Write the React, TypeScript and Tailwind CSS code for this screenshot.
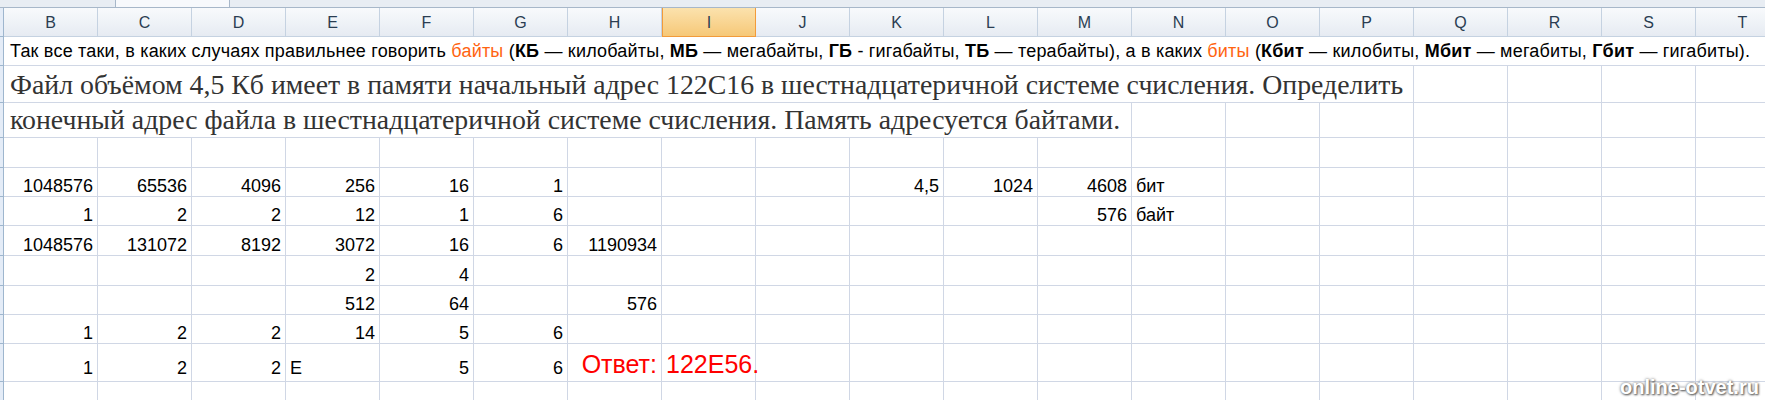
import React from "react";

const COLS = ["B", "C", "D", "E", "F", "G", "H", "I", "J", "K", "L", "M", "N", "O", "P", "Q", "R", "S", "T"];

const sans = "font-['Liberation_Sans',Arial,sans-serif]";
const serif = "font-['Liberation_Serif','Times_New_Roman',serif]";

type Cell = { v: string; left?: boolean; red?: boolean };
type Row = { h: string; pb: string; cells: Partial<Record<string, Cell>> };

const n = (v: string): Cell => ({ v });

const rows: Row[] = [
  { h: "h-[30px]", pb: "pb-[1px]", cells: {} },
  {
    h: "h-[29px]",
    pb: "pb-[1px]",
    cells: {
      B: n("1048576"), C: n("65536"), D: n("4096"), E: n("256"), F: n("16"), G: n("1"),
      K: n("4,5"), L: n("1024"), M: n("4608"), N: { v: "бит", left: true },
    },
  },
  {
    h: "h-[29px]",
    pb: "pb-[1px]",
    cells: {
      B: n("1"), C: n("2"), D: n("2"), E: n("12"), F: n("1"), G: n("6"),
      M: n("576"), N: { v: "байт", left: true },
    },
  },
  {
    h: "h-[30px]",
    pb: "pb-[1px]",
    cells: {
      B: n("1048576"), C: n("131072"), D: n("8192"), E: n("3072"), F: n("16"), G: n("6"),
      H: n("1190934"),
    },
  },
  { h: "h-[30px]", pb: "pb-[1px]", cells: { E: n("2"), F: n("4") } },
  { h: "h-[29px]", pb: "pb-[1px]", cells: { E: n("512"), F: n("64"), H: n("576") } },
  {
    h: "h-[29px]",
    pb: "pb-[1px]",
    cells: { B: n("1"), C: n("2"), D: n("2"), E: n("14"), F: n("5"), G: n("6") },
  },
  {
    h: "h-[38px]",
    pb: "pb-[4px]",
    cells: {
      B: n("1"), C: n("2"), D: n("2"), E: { v: "E", left: true }, F: n("5"), G: n("6"),
      H: { v: "Ответ:", red: true }, I: { v: "122E56.", left: true, red: true },
    },
  },
  { h: "h-[30px]", pb: "pb-[1px]", cells: {} },
];

function RowStub() {
  return <div className="h-full w-[4px] shrink-0 border-r border-b border-[#9eb6ce] bg-[#e4ecf7]" />;
}

function GridCell({ cell, pb }: { cell?: Cell; pb: string }) {
  if (!cell) {
    return <div className="h-full w-[94px] shrink-0 border-r border-b border-[#d0d7e5]" />;
  }
  const align = cell.left ? "justify-start pl-[4px]" : "justify-end pr-[4px]";
  const text = cell.red
    ? "text-[25px] leading-[25px] text-[#ff0000]"
    : "text-[18px] leading-[18px] text-black";
  return (
    <div
      className={`flex h-full w-[94px] shrink-0 items-end whitespace-nowrap border-r border-b border-[#d0d7e5] ${align} ${pb} ${text}`}
    >
      {cell.v}
    </div>
  );
}

function EmptyCells({ count }: { count: number }) {
  return (
    <>
      {Array.from({ length: count }).map((_, i) => (
        <div key={i} className="h-full w-[94px] shrink-0 border-r border-b border-[#d0d7e5]" />
      ))}
    </>
  );
}

export default function App() {
  return (
    <div className={`relative h-[400px] w-[1765px] overflow-hidden bg-white ${sans}`}>
      {/* remains of the formula bar */}
      <div className="relative h-[8px] border-b border-[#a7b7c9] bg-[#e8edf3]">
        <div className="absolute left-[115px] top-0 h-[7px] w-[115px] border-x border-[#a7b7c9] bg-[#f7f9fc]" />
      </div>

      {/* column headers */}
      <div className="flex h-[29px]">
        <div className="h-full w-[4px] shrink-0 border-r border-b border-[#9eb6ce] bg-[#e4ecf7]" />
        {COLS.map((c) =>
          c === "I" ? (
            <div
              key={c}
              className="flex h-full w-[94px] shrink-0 items-center justify-center border-x border-b border-[#f29b3a] bg-gradient-to-b from-[#fbe2ad] to-[#f6c877] pt-[1px] text-[16px] text-[#2a3d52]"
            >
              {c}
            </div>
          ) : (
            <div
              key={c}
              className="flex h-full w-[94px] shrink-0 items-center justify-center border-r border-b border-[#c5d2e1] bg-gradient-to-b from-[#f8fafc] to-[#e6ebf2] pt-[1px] text-[16px] text-[#2a3d52]"
            >
              {c}
            </div>
          )
        )}
      </div>

      {/* row 1: note about bytes and bits */}
      <div className="flex h-[29px]">
        <RowStub />
        <div className="flex h-full w-[1786px] shrink-0 items-end whitespace-nowrap border-b border-[#d0d7e5] pb-[5px] pl-[6px] text-[18px] leading-[18px] tracking-[0.2px] text-black">
          <span>
            Так все таки, в каких случаях правильнее говорить{" "}
            <span className="text-[#ff6410]">байты</span> (<b>КБ</b> — килобайты, <b>МБ</b> — мегабайты,{" "}
            <b>ГБ</b> - гигабайты, <b>ТБ</b> — терабайты), а в каких{" "}
            <span className="text-[#ff6410]">биты</span> (<b>Кбит</b> — килобиты, <b>Мбит</b> — мегабиты,{" "}
            <b>Гбит</b> — гигабиты).
          </span>
        </div>
      </div>

      {/* rows 2-3: the task */}
      <div className="flex h-[37px]">
        <RowStub />
        <div
          className={`flex h-full w-[1410px] shrink-0 items-end whitespace-nowrap border-r border-b border-[#d0d7e5] pb-[3px] pl-[6px] text-[27.8px] leading-[28px] text-[#333333] ${serif}`}
        >
          Файл объёмом 4,5 Кб имеет в памяти начальный адрес 122C16 в шестнадцатеричной системе счисления. Определить
        </div>
        <EmptyCells count={4} />
      </div>
      <div className="flex h-[35px]">
        <RowStub />
        <div
          className={`flex h-full w-[1128px] shrink-0 items-end whitespace-nowrap border-r border-b border-[#d0d7e5] pb-[3px] pl-[6px] text-[27.8px] leading-[28px] text-[#333333] ${serif}`}
        >
          конечный адрес файла в шестнадцатеричной системе счисления. Память адресуется байтами.
        </div>
        <EmptyCells count={7} />
      </div>

      {/* worksheet rows with the calculation */}
      {rows.map((r, i) => (
        <div key={i} className={`flex ${r.h}`}>
          <RowStub />
          {COLS.map((c) => (
            <GridCell key={c} cell={r.cells[c]} pb={r.pb} />
          ))}
        </div>
      ))}

      <div className="absolute left-[1620px] top-[377px] text-[20px] font-bold leading-[20px] text-white [text-shadow:0_0_3px_#6b6b6b,1px_1px_2px_#555]">
        online-otvet.ru
      </div>
    </div>
  );
}
